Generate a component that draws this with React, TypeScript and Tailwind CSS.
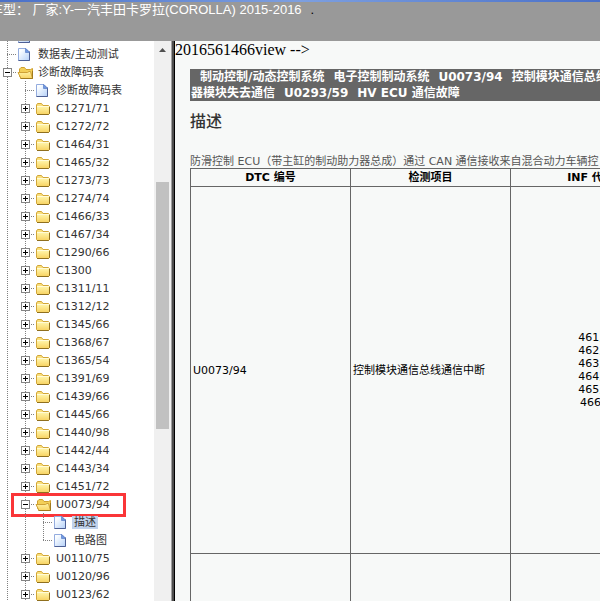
import React from 'react';

type Line = 'pass' | 'tee' | 'end';
type IconKind = 'page' | 'folder' | 'open';

interface TreeNode {
  label: string;
  level: 1 | 2 | 3;
  icon: IconKind;
  last?: boolean;
  selected?: boolean;
  marked?: boolean;
}

const CODES_BEFORE = [
  'C1271/71', 'C1272/72', 'C1464/31', 'C1465/32', 'C1273/73', 'C1274/74', 'C1466/33', 'C1467/34',
  'C1290/66', 'C1300', 'C1311/11', 'C1312/12', 'C1345/66', 'C1368/67', 'C1365/54', 'C1391/69',
  'C1439/66', 'C1445/66', 'C1440/98', 'C1442/44', 'C1443/34', 'C1451/72',
];
const CODES_AFTER = ['U0110/75', 'U0120/96', 'U0123/62'];

const toFolder = (label: string): TreeNode => ({ label, level: 2, icon: 'folder' });

const nodes: TreeNode[] = [
  { label: '', level: 1, icon: 'page' },
  { label: '数据表/主动测试', level: 1, icon: 'page' },
  { label: '诊断故障码表', level: 1, icon: 'open' },
  { label: '诊断故障码表', level: 2, icon: 'page' },
  ...CODES_BEFORE.map(toFolder),
  { label: 'U0073/94', level: 2, icon: 'open', marked: true },
  { label: '描述', level: 3, icon: 'page', selected: true },
  { label: '电路图', level: 3, icon: 'page', last: true },
  ...CODES_AFTER.map(toFolder),
];

const infCodes = ['461,', '462,', '463,', '464,', '465,', '466'];

// Dotted connector lines that fill one 18px tree cell
const Connector: React.FC<{ line: Line }> = ({ line }) => (
  <svg width="18" height="18" viewBox="0 0 18 18" shapeRendering="crispEdges" className="block shrink-0">
    <path d={line === 'end' ? 'M9.5 0V10' : 'M9.5 0V18'} stroke="#808080" strokeDasharray="1 1" />
    {line !== 'pass' && <path d="M9 9.5H18" stroke="#808080" strokeDasharray="1 1" />}
  </svg>
);

// Plus / minus box with its connector lines
const Toggle: React.FC<{ open: boolean; name: string }> = ({ open, name }) => (
  <button type="button" aria-label={name} aria-expanded={open} className="block shrink-0">
    <svg width="18" height="18" viewBox="0 0 18 18" shapeRendering="crispEdges" className="block">
      <path d="M9.5 0V18M9 9.5H18" stroke="#808080" strokeDasharray="1 1" />
      <rect x="5.5" y="5.5" width="8" height="8" fill="#fff" stroke="#848484" />
      <path d={open ? 'M7 9.5H12' : 'M7 9.5H12M9.5 7V12'} stroke="#000" />
    </svg>
  </button>
);

const NodeIcon: React.FC<{ kind: IconKind }> = ({ kind }) => (
  <svg width="18" height="18" viewBox="0 0 18 18" className="block shrink-0">
    <defs>
      <linearGradient id="paper" x1="0" y1="0" x2="1" y2="1">
        <stop offset="0.2" stopColor="#fafdff" />
        <stop offset="1" stopColor="#b4d0f8" />
      </linearGradient>
      <linearGradient id="gold" x1="0" y1="0" x2="0" y2="1">
        <stop offset="0" stopColor="#fff3a6" />
        <stop offset="1" stopColor="#f8d464" />
      </linearGradient>
    </defs>
    {kind === 'page' && (
      <>
        <path d="M2.5 3.5H10L13.5 7V15.5H2.5Z" fill="url(#paper)" stroke="#94acdf" />
        <path d="M13.5 6.5V15.5H2.5" fill="none" stroke="#4d5f94" />
        <path d="M9.5 3.5V7.5H13.5Z" fill="#6f98e2" stroke="#4f74c0" strokeWidth="0.6" />
      </>
    )}
    {kind === 'folder' && (
      <>
        <path d="M2.5 14.5V6L3.5 4.5H7.5L9 6.5H14.5L15.5 7.5V14.5L14.5 15.5H3.5Z" fill="#fae07c" stroke="#d2a637" />
        <path d="M3 8H15V15H3Z" fill="url(#gold)" />
        <path d="M3 7.5H15" stroke="#fffbd9" />
        <path d="M3 15.5H14.5L15.5 14.5V8" fill="none" stroke="#8f6f1e" />
      </>
    )}
    {kind === 'open' && (
      <>
        <path d="M3.5 13V6L5 4.5H8.5L10 6.5H14.5L16.5 5.5V15.5H5Z" fill="#f3cf58" stroke="#cfa02f" />
        <path d="M2 9.5H11.5L13 8.5H14.5L16.5 15.5H5Z" fill="url(#gold)" stroke="#cfa136" />
        <path d="M4.5 15.5H16.5V8" fill="none" stroke="#a17a1d" />
      </>
    )}
  </svg>
);

const TreeRow: React.FC<{ node: TreeNode }> = ({ node }) => {
  const { label, level, icon, last, selected, marked } = node;

  return (
    <li className="relative flex h-[18px] items-center">
      {level > 1 && <Connector line="pass" />}
      {level > 2 && <Connector line="pass" />}
      {icon === 'page' ? <Connector line={last ? 'end' : 'tee'} /> : <Toggle open={icon === 'open'} name={label} />}
      <NodeIcon kind={icon} />
      <a
        href="#"
        className={`ml-[2px] px-[2px] text-[11px] leading-[13px] whitespace-nowrap text-[#333] ${
          selected ? 'bg-[#c0d2ec]' : ''
        }`}
      >
        {label}
      </a>

      {/* Highlight frame */}
      {marked && (
        <span className="pointer-events-none absolute -top-[2px] left-[13px] h-[24px] w-[115px] border-3 border-[#fa3538]" />
      )}
    </li>
  );
};

const Sidebar: React.FC = () => (
  <aside className="flex w-[171px] shrink-0 overflow-hidden bg-white">
    <ul className="-mt-[14px] -ml-[2px] flex-1">
      {nodes.map((node, i) => (
        <TreeRow key={i} node={node} />
      ))}
    </ul>

    {/* Scrollbar */}
    <div className="flex w-[17px] flex-col items-center bg-[#f0f0f0]">
      <button type="button" aria-label="向上滚动" className="flex h-[17px] w-full items-center justify-center">
        <svg width="7" height="4" viewBox="0 0 7 4">
          <path d="M0 4L3.5 0L7 4Z" fill="#505050" />
        </svg>
      </button>
      <div className="mt-[124px] h-[247px] w-[13px] bg-[#c1c1c1]" />
    </div>
  </aside>
);

const cell = 'border border-[#666] px-[2px]';

const Content: React.FC = () => (
  <main className="min-w-0 flex-1 overflow-hidden bg-[#f7f9f8]">
    <p className="font-['Liberation_Serif',serif] text-[16px] leading-[18px] text-black">2016561466view --&gt;</p>

    <div className="mt-[10px] ml-[15px]">
      <div className="bg-[#666] px-px text-[12px] leading-[16px] font-bold text-white">
        <p className="flex gap-[9px] pl-[9px] whitespace-nowrap">
          <span>制动控制/动态控制系统</span>
          <span>电子控制制动系统</span>
          <span>U0073/94</span>
          <span>控制模块通信总线</span>
        </p>
        <p className="flex gap-[9px] whitespace-nowrap">
          <span>器模块失去通信</span>
          <span>U0293/59</span>
          <span>HV ECU 通信故障</span>
        </p>
      </div>

      <h1 className="mt-[10px] text-[16px] leading-[22px] font-medium text-[#333]">描述</h1>

      <p className="mt-[22px] text-[11px] leading-[13px] whitespace-nowrap text-[#555]">
        防滑控制 ECU（带主缸的制动助力器总成）通过 CAN 通信接收来自混合动力车辆控
      </p>

      <table className="w-[481px] table-fixed border-collapse text-[11px] leading-[13px] text-black">
        <thead>
          <tr className="h-[18px]">
            <th className={cell}>DTC 编号</th>
            <th className={cell}>检测项目</th>
            <th className={cell}>INF 代码</th>
          </tr>
        </thead>
        <tbody>
          <tr className="h-[367px]">
            <td className={cell}>U0073/94</td>
            <td className={cell}>控制模块通信总线通信中断</td>
            <td className={`${cell} text-center`}>
              {infCodes.map(code => (
                <div key={code}>{code}</div>
              ))}
            </td>
          </tr>
          <tr className="h-[367px]">
            <td className={cell} />
            <td className={cell} />
            <td className={cell} />
          </tr>
        </tbody>
      </table>
    </div>
  </main>
);

export default function App() {
  return (
    <div className="flex h-screen flex-col overflow-hidden font-['DejaVu_Sans','Noto_Sans_CJK_SC',sans-serif]">
      {/* Vehicle bar */}
      <div className="h-[2px] shrink-0 bg-linear-to-r from-[#4a70c8] via-[#7d9fe0] to-[#4a70c8]" />
      <header className="h-[39px] shrink-0 overflow-hidden bg-[#999] font-['Liberation_Sans','Noto_Sans_CJK_SC',sans-serif] text-[13px] leading-[15px] whitespace-nowrap text-white">
        <span className="-ml-[10px]">车型： 厂家:Y-一汽丰田卡罗拉(COROLLA) 2015-2016</span>
        <span className="ml-[9px] text-black">.</span>
      </header>

      <div className="flex min-h-0 flex-1">
        <Sidebar />
        <div className="w-[4px] shrink-0 border-r border-l border-r-black border-l-[#a0a0a0] bg-[#4d4d4d]" />
        <Content />
      </div>
    </div>
  );
}
